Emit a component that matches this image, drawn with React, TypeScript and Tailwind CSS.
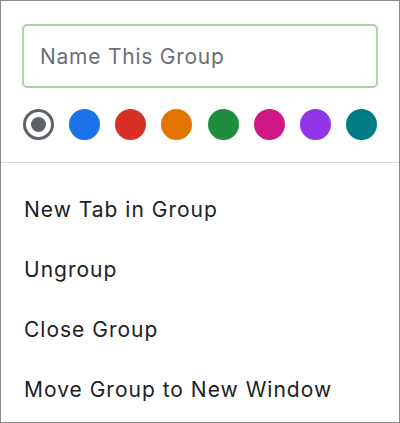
import React from "react";

const COLORS = ["#1a73e8", "#d93025", "#e37400", "#1e8e3e", "#d01884", "#9334e6", "#007b83"];
const ITEMS = ["New Tab in Group", "Ungroup", "Close Group", "Move Group to New Window"];

export default function App() {
  return (
    <div
      className="w-[400px] h-[423px] bg-white border border-[#8a8a8a] flex flex-col"
      style={{ fontFamily: "Inter, 'Liberation Sans', sans-serif" }}
    >
      {/* Name + colours */}
      <div className="px-[21px] pt-[23px]">
        <input
          type="text"
          placeholder="Name This Group"
          className="w-[356px] h-[64px] rounded-[5px] border-2 border-[#a8d5a0] px-[16px] text-[21px] tracking-[0.75px] text-[#202124] placeholder:text-[#6b6f74] outline-none"
        />
        <div className="flex items-center justify-between mt-[21px] w-[355px] pl-[1px]">
          <div className="w-[31px] h-[31px] rounded-full border-[3px] border-[#5f6368] flex items-center justify-center">
            <div className="w-[15px] h-[15px] rounded-full bg-[#5f6368]" />
          </div>
          {COLORS.map((c) => (
            <div key={c} className="w-[31px] h-[31px] rounded-full" style={{ background: c }} />
          ))}
        </div>
      </div>

      <div className="mt-[22px] h-[1px] bg-[#dadce0]" />

      {/* Menu */}
      <div className="pt-[17px] flex flex-col">
        {ITEMS.map((item) => (
          <div key={item} className="h-[60px] flex items-center px-[23px] text-[21px] tracking-[1px] text-[#202124]">
            {item}
          </div>
        ))}
      </div>
    </div>
  );
}
